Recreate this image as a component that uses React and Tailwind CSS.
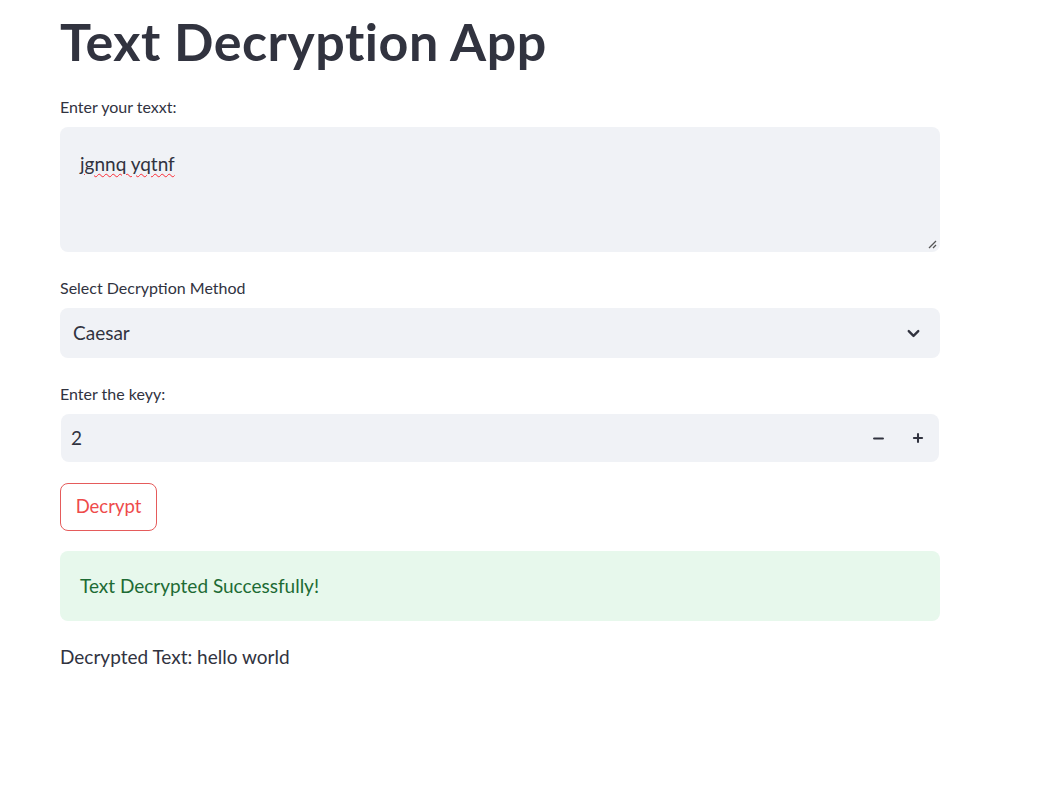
import { ChevronDown, Minus, Plus } from "lucide-react";

function App() {
  return (
    <div
      className="min-h-screen bg-white text-[#31333f]"
      style={{ fontFamily: '"Lato", "Noto Sans", sans-serif' }}
    >
      <div className="w-[880px] ml-[60px] pt-[9px]">
        <h1 className="text-[52px] font-bold leading-[64px] tracking-[0.5px] text-[#31333f]">
          Text Decryption App
        </h1>

        <label className="block mt-[24px] text-[16px] leading-[20px]">
          Enter your texxt:
        </label>
        <div className="relative mt-[10px] h-[125px] rounded-lg bg-[#f0f2f6] px-[20px] pt-[23px]">
          <span className="text-[19px] underline decoration-wavy decoration-red-500 decoration-1 underline-offset-2">
            jgnnq yqtnf
          </span>
          <svg
            className="absolute right-[3px] bottom-[3px]"
            width="10"
            height="10"
            viewBox="0 0 10 10"
          >
            <path d="M9 2 L2 9 M9 6 L6 9" stroke="#555" strokeWidth="1.3" />
          </svg>
        </div>

        <label className="block mt-[26px] text-[16px] leading-[20px]">
          Select Decryption Method
        </label>
        <div className="mt-[10px] h-[50px] rounded-lg bg-[#f0f2f6] flex items-center justify-between pl-[13px] pr-[17px]">
          <span className="text-[19px]">Caesar</span>
          <ChevronDown size={19} strokeWidth={3} />
        </div>

        <label className="block mt-[26px] text-[16px] leading-[20px]">
          Enter the keyy:
        </label>
        <div className="mt-[10px] mx-[1px] h-[48px] rounded-lg bg-[#f0f2f6] flex items-center pl-[10px] pr-[14px]">
          <span className="text-[19px] flex-1">2</span>
          <Minus size={15} strokeWidth={3.5} className="mr-[25px]" />
          <Plus size={14} strokeWidth={3.5} />
        </div>

        <button className="mt-[21px] h-[48px] w-[97px] rounded-lg border border-[#e55b5b] text-[#ee4b4b] text-[18.5px] bg-white">
          Decrypt
        </button>

        <div className="mt-[20px] h-[70px] rounded-lg bg-[#e7f8ec] flex items-center px-[20px] text-[19px] text-[#1d6b34]">
          Text Decrypted Successfully!
        </div>

        <p className="mt-[23px] text-[19px] leading-[26px]">
          Decrypted Text: hello world
        </p>
      </div>
    </div>
  );
}

export default App;
